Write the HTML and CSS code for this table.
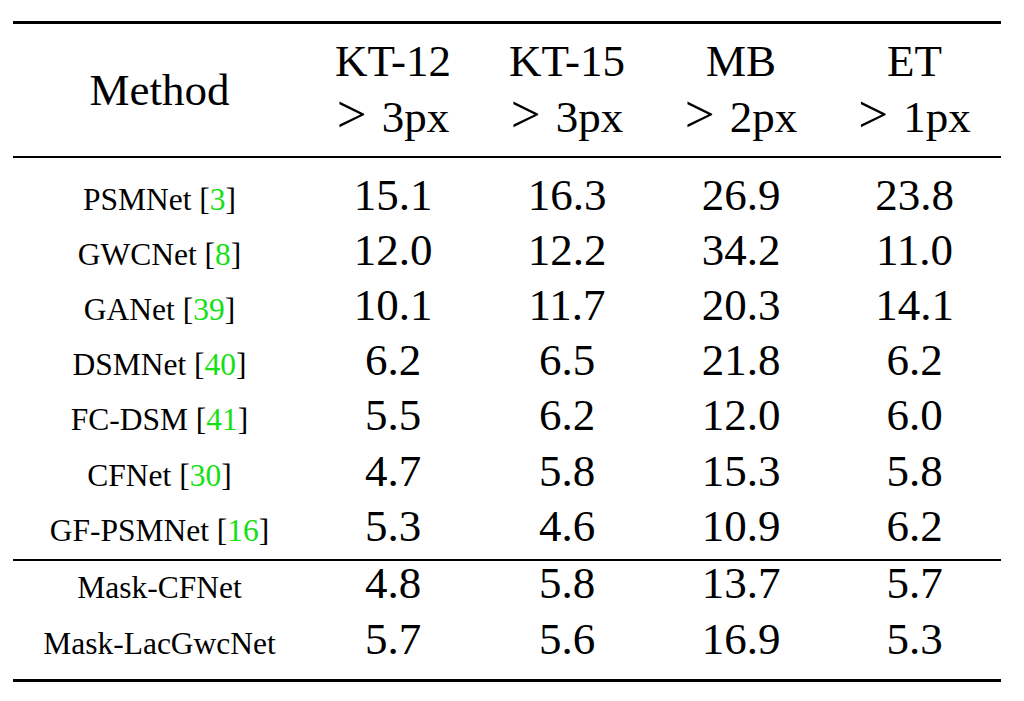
FILE: index.html
```html
<!DOCTYPE html>
<html>
<head>
<meta charset="utf-8">
<link rel="stylesheet" href="styles.css">
</head>
<body>
<div class="table">
  <div class="head">
    <div class="hcell method-head">Method</div>
    <div class="hcell"><div>KT-12</div><div><span class="gt">&gt;</span>3px</div></div>
    <div class="hcell"><div>KT-15</div><div><span class="gt">&gt;</span>3px</div></div>
    <div class="hcell"><div>MB</div><div><span class="gt">&gt;</span>2px</div></div>
    <div class="hcell"><div>ET</div><div><span class="gt">&gt;</span>1px</div></div>
  </div>
  <div class="group group-main">
    <div class="row"><div class="name">PSMNet [<span class="cite">3</span>]</div><div class="num">15.1</div><div class="num">16.3</div><div class="num">26.9</div><div class="num">23.8</div></div>
    <div class="row"><div class="name">GWCNet [<span class="cite">8</span>]</div><div class="num">12.0</div><div class="num">12.2</div><div class="num">34.2</div><div class="num">11.0</div></div>
    <div class="row"><div class="name">GANet [<span class="cite">39</span>]</div><div class="num">10.1</div><div class="num">11.7</div><div class="num">20.3</div><div class="num">14.1</div></div>
    <div class="row"><div class="name">DSMNet [<span class="cite">40</span>]</div><div class="num">6.2</div><div class="num">6.5</div><div class="num">21.8</div><div class="num">6.2</div></div>
    <div class="row"><div class="name">FC-DSM [<span class="cite">41</span>]</div><div class="num">5.5</div><div class="num">6.2</div><div class="num">12.0</div><div class="num">6.0</div></div>
    <div class="row"><div class="name">CFNet [<span class="cite">30</span>]</div><div class="num">4.7</div><div class="num">5.8</div><div class="num">15.3</div><div class="num">5.8</div></div>
    <div class="row"><div class="name">GF-PSMNet [<span class="cite">16</span>]</div><div class="num">5.3</div><div class="num">4.6</div><div class="num">10.9</div><div class="num">6.2</div></div>
  </div>
  <div class="group group-ours">
    <div class="row"><div class="name">Mask-CFNet</div><div class="num">4.8</div><div class="num">5.8</div><div class="num">13.7</div><div class="num">5.7</div></div>
    <div class="row"><div class="name">Mask-LacGwcNet</div><div class="num">5.7</div><div class="num">5.6</div><div class="num">16.9</div><div class="num">5.3</div></div>
  </div>
</div>
</body>
</html>
```
FILE: styles.css
```css
html, body {
  margin: 0;
  background: #ffffff;
}

.table {
  margin: 21px 0 0 13px;
  width: 988px;
  border-top: 3px solid #000;
  border-bottom: 3px solid #000;
  font-family: "Liberation Serif", "Times New Roman", serif;
  color: #000;
}

.head,
.row {
  display: grid;
  grid-template-columns: 293px 174px 174px 174px 173px;
}

.head {
  height: 132px;
  border-bottom: 2px solid #000;
}

.hcell {
  font-size: 45px;
  line-height: 56px;
  text-align: center;
  padding-top: 9px;
}

.hcell.method-head {
  align-self: center;
  padding-top: 0;
}

.gt {
  font-size: 1.18em;
  line-height: 0;
  margin-right: 15px;
}

.group-main {
  padding-top: 14.6px;
  border-bottom: 2px solid #000;
}

.group-main .row {
  height: 55.2px;
}

.group-ours {
  padding-bottom: 6px;
}

.group-ours .row {
  height: 56px;
}

.row {
  align-items: baseline;
}

.num {
  font-size: 45px;
  line-height: 45px;
  text-align: center;
}

.name {
  font-size: 31.5px;
  line-height: 45px;
  text-align: center;
}

.cite {
  color: #14e014;
}
```
